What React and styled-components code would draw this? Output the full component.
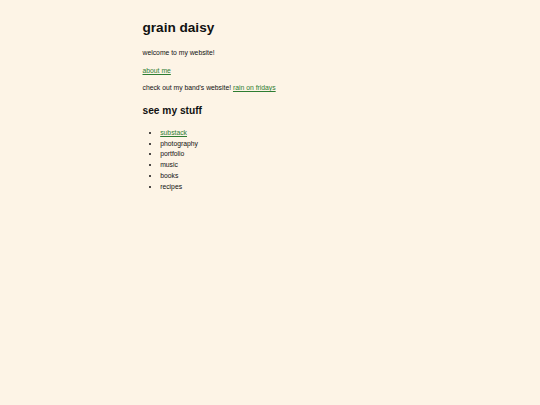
import React from "react";
import styled, { createGlobalStyle } from "styled-components";

const Global = createGlobalStyle`
  html, body { background: #fdf4e6; }
  body {
    margin: 0;
    padding: 3.4px;
    font-family: "Liberation Sans", Arial, sans-serif;
    font-size: 6.8px;
    line-height: 1.6;
    color: #111;
  }
`;

const Container = styled.main`
  max-width: 255px;
  margin: 0 auto;
  padding-top: 4.5px;
`;

const Title = styled.h1`
  font-size: 2em;
  line-height: 1.6;
  margin: 0.67em 0;
  font-weight: bold;
`;

const Subtitle = styled.h2`
  font-size: 1.5em;
  line-height: 1.6;
  margin: 0.83em 0 0.9em;
  font-weight: bold;
`;

const Para = styled.p`
  margin: 1em 0;
`;

const Link = styled.a`
  color: #2e7d32;
  text-decoration: underline;
`;

const List = styled.ul`
  margin: 1em 0;
  padding-left: 2.6em;
`;

const Item = styled.li`
  line-height: 1.58;
`;

export default function App() {
  return (
    <>
      <Global />
      <Container>
        <Title>grain daisy</Title>
        <Para>welcome to my website!</Para>
        <Para>
          <Link href="#">about me</Link>
        </Para>
        <Para>
          check out my band's website! <Link href="#">rain on fridays</Link>
        </Para>
        <Subtitle>see my stuff</Subtitle>
        <List>
          <Item>
            <Link href="#">substack</Link>
          </Item>
          <Item>photography</Item>
          <Item>portfolio</Item>
          <Item>music</Item>
          <Item>books</Item>
          <Item>recipes</Item>
        </List>
      </Container>
    </>
  );
}
